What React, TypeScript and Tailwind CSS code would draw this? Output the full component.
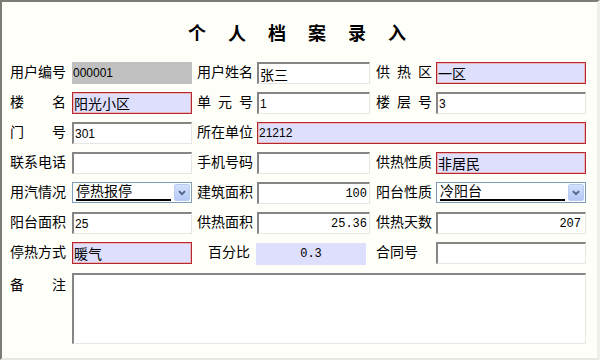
import React from 'react';

type Kind = 'plain' | 'red' | 'gray' | 'lav';

const boxStyles: Record<Kind, string> = {
  plain:
    'bg-white border-t-2 border-l-2 border-t-[#858585] border-l-[#858585] border-b border-r border-b-[#e6e6e2] border-r-[#e6e6e2]',
  red: 'bg-[#dedefd] border border-[#b3282d] shadow-[inset_0_0_0_1px_#ecb4bc]',
  gray: 'bg-[#c0c0c0]',
  lav: 'bg-[#dedefd]',
};

const Label = ({ text, spread = false, className = '' }: { text: string; spread?: boolean; className?: string }) => (
  <div className={`text-[14px] leading-[16px] pt-[1px] text-black ${className}`}>
    {spread ? (
      <div className="flex justify-between w-[56px]">
        {text.split('').map((c, i) => (
          <span key={i}>{c}</span>
        ))}
      </div>
    ) : (
      text
    )}
  </div>
);

const Field = ({
  value = '',
  kind = 'plain',
  align = 'left',
  cjk = false,
  mono = false,
  className = '',
}: {
  value?: string;
  kind?: Kind;
  align?: 'left' | 'right' | 'center';
  cjk?: boolean;
  mono?: boolean;
  className?: string;
}) => {
  const font = cjk
    ? "text-[14px] font-['Noto_Sans_CJK_SC',sans-serif]"
    : mono
    ? "text-[12px] font-['Liberation_Mono',monospace]"
    : "text-[12px] font-['Liberation_Sans',Arial,sans-serif]";
  const just = align === 'right' ? 'justify-end pr-[2px]' : align === 'center' ? 'justify-center' : 'justify-start pl-[1px]';
  return (
    <div className={`h-[22px] flex items-center overflow-hidden leading-none ${just} ${font} ${boxStyles[kind]} ${className}`}>
      {value}
    </div>
  );
};

const Combo = ({ value }: { value: string }) => (
  <div className="h-[21px] bg-white border border-[#7f9db9] flex items-center">
    <div className="flex-1 relative h-full pl-[3px] text-[14px] leading-[15px]">
      <span>{value}</span>
      <div className="absolute left-[3px] right-[3px] bottom-[1px] h-[2px] bg-black" />
    </div>
    <div className="w-[16px] h-[17px] mr-[1px] rounded-[2px] border border-[#b9cdf4] bg-gradient-to-b from-[#d3e0fd] to-[#b4c9f6] flex items-center justify-center">
      <svg width="8" height="6" viewBox="0 0 8 6">
        <path d="M1 1.2 L4 4.2 L7 1.2" fill="none" stroke="#4d6185" strokeWidth="1.8" />
      </svg>
    </div>
  </div>
);

export default function App() {
  return (
    <div className="w-[600px] h-[360px] bg-[#fffffa] border-t-2 border-l-2 border-t-[#7d7d75] border-l-[#7d7d75] border-r-[3px] border-b-[2px] border-r-[#f0f0ea] border-b-[#e8e8e2] font-['Noto_Sans_CJK_SC',sans-serif] text-black overflow-hidden">
      {/* Title */}
      <div className="pt-[19px] h-[60px]">
        <div className="flex justify-center gap-[22px] -ml-[5px] text-[18px] leading-[22px] font-bold">
          {'个人档案录入'.split('').map((c, i) => (
            <span key={i}>{c}</span>
          ))}
        </div>
      </div>

      <div className="pl-[8px] grid grid-cols-[62px_120px_65px_113px_66px_150px] gap-y-[8px]">
        {/* row 1 */}
        <Label text="用户编号" />
        <Field value="000001" kind="gray" />
        <Label text="用户姓名" className="pl-[5px]" />
        <Field value="张三" cjk />
        <Label text="供热区" spread className="pl-[6px]" />
        <Field value="一区" kind="red" cjk />

        {/* row 2 */}
        <Label text="楼名" spread />
        <Field value="阳光小区" kind="red" cjk />
        <Label text="单元号" spread className="pl-[5px]" />
        <Field value="1" />
        <Label text="楼层号" spread className="pl-[6px]" />
        <Field value="3" />

        {/* row 3 */}
        <Label text="门号" spread />
        <Field value="301" />
        <Label text="所在单位" className="pl-[5px]" />
        <div className="col-span-3">
          <Field value="21212" kind="red" />
        </div>

        {/* row 4 */}
        <Label text="联系电话" />
        <Field />
        <Label text="手机号码" className="pl-[5px]" />
        <Field />
        <Label text="供热性质" className="pl-[6px]" />
        <Field value="非居民" kind="red" cjk />

        {/* row 5 */}
        <Label text="用汽情况" />
        <Combo value="停热报停" />
        <Label text="建筑面积" className="pl-[5px]" />
        <Field value="100" align="right" mono />
        <Label text="阳台性质" className="pl-[6px]" />
        <Combo value="冷阳台" />

        {/* row 6 */}
        <Label text="阳台面积" />
        <Field value="25" />
        <Label text="供热面积" className="pl-[5px]" />
        <Field value="25.36" align="right" mono />
        <Label text="供热天数" className="pl-[6px]" />
        <Field value="207" align="right" mono className="pr-[4px]" />

        {/* row 7 */}
        <Label text="停热方式" />
        <Field value="暖气" kind="red" cjk />
        <Label text="百分比" className="pl-[16px]" />
        <Field value="0.3" kind="lav" align="center" mono className="h-[20px] mt-[1px] -ml-[1px] w-[110px]" />
        <Label text="合同号" className="pl-[6px]" />
        <Field />

        {/* row 8 */}
        <Label text="备注" spread className="pt-[3px]" />
        <div className="col-span-5 h-[71px] bg-white border-t-2 border-l-2 border-t-[#858585] border-l-[#858585] border-b border-r border-b-[#e6e6e2] border-r-[#e6e6e2]" />
      </div>
    </div>
  );
}
